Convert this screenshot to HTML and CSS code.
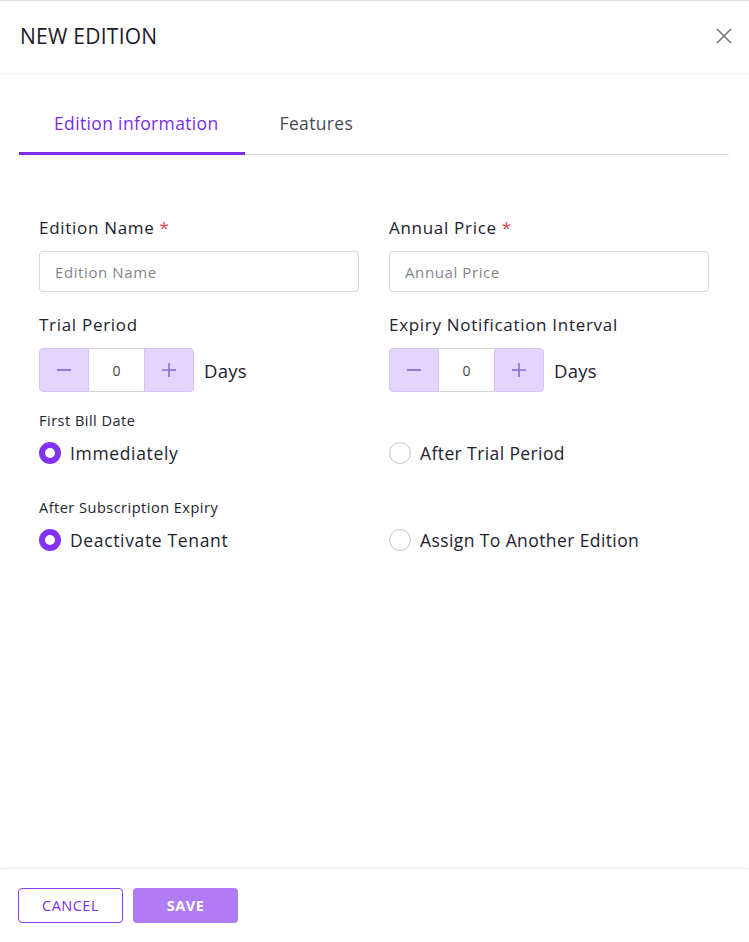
FILE: index.html
```html
<!DOCTYPE html>
<html lang="en">
<head>
<meta charset="utf-8">
<title>New Edition</title>
<link rel="stylesheet" href="styles.css">
</head>
<body>
<div class="modal">
  <header class="modal-header">
    <h1 class="modal-title">NEW EDITION</h1>
    <button class="close-btn" aria-label="Close">
      <svg width="18" height="18" viewBox="0 0 18 18"><path d="M2 2L16 16M16 2L2 16" stroke="#7a7a7a" stroke-width="1.6" fill="none"/></svg>
    </button>
  </header>
  <div class="modal-body">
    <nav class="tabs">
      <div class="tab active">Edition information</div>
      <div class="tab">Features</div>
    </nav>
    <div class="form">
      <div class="grid">
        <div class="field">
          <label class="label">Edition Name <span class="req">*</span></label>
          <input class="input" type="text" placeholder="Edition Name">
        </div>
        <div class="field">
          <label class="label">Annual Price <span class="req">*</span></label>
          <input class="input" type="text" placeholder="Annual Price">
        </div>
        <div class="field field-step">
          <label class="label">Trial Period</label>
          <div class="stepper-row">
            <div class="stepper">
              <button class="step-btn"><svg width="16" height="16" viewBox="0 0 16 16"><path d="M1 8H15" stroke="#8e6bd6" stroke-width="1.8"/></svg></button>
              <div class="step-val">0</div>
              <button class="step-btn"><svg width="16" height="16" viewBox="0 0 16 16"><path d="M1 8H15M8 1V15" stroke="#8e6bd6" stroke-width="1.6"/></svg></button>
            </div>
            <span class="days">Days</span>
          </div>
        </div>
        <div class="field field-step">
          <label class="label">Expiry Notification Interval</label>
          <div class="stepper-row">
            <div class="stepper">
              <button class="step-btn"><svg width="16" height="16" viewBox="0 0 16 16"><path d="M1 8H15" stroke="#8e6bd6" stroke-width="1.8"/></svg></button>
              <div class="step-val">0</div>
              <button class="step-btn"><svg width="16" height="16" viewBox="0 0 16 16"><path d="M1 8H15M8 1V15" stroke="#8e6bd6" stroke-width="1.6"/></svg></button>
            </div>
            <span class="days">Days</span>
          </div>
        </div>
      </div>

      <div class="group">
        <div class="group-title">First Bill Date</div>
        <div class="radio-row">
          <div class="radio"><span class="dot checked"></span>Immediately</div>
          <div class="radio"><span class="dot"></span>After Trial Period</div>
        </div>
      </div>
      <div class="group group-2">
        <div class="group-title">After Subscription Expiry</div>
        <div class="radio-row">
          <div class="radio"><span class="dot checked"></span>Deactivate Tenant</div>
          <div class="radio"><span class="dot"></span>Assign To Another Edition</div>
        </div>
      </div>
    </div>
  </div>
  <footer class="modal-footer">
    <button class="btn btn-cancel">CANCEL</button>
    <button class="btn btn-save">SAVE</button>
  </footer>
</div>
</body>
</html>
```

FILE: styles.css
```css
* { box-sizing: border-box; }
html, body { margin: 0; padding: 0; }
body {
  font-family: "Open Sans", "Liberation Sans", sans-serif;
  color: #1f1f2e;
  background: #fff;
}
.modal {
  width: 749px;
  height: 942px;
  display: flex;
  flex-direction: column;
  border-top: 1px solid #dcdcdc;
}
.modal-header {
  height: 73px;
  display: flex;
  align-items: center;
  justify-content: space-between;
  padding: 0 16px 3px 20px;
  border-bottom: 1px solid #f1f1f3;
}
.modal-title {
  margin: 0;
  font-size: 21px;
  font-weight: 500;
  letter-spacing: 0.25px;
  color: #1b1b28;
}
.close-btn {
  border: 0;
  background: none;
  padding: 0;
  width: 18px;
  height: 18px;
  cursor: pointer;
}
.modal-body {
  flex: 1;
  padding: 0 20px 0 19px;
}
.tabs {
  display: flex;
  height: 81px;
  border-bottom: 1px solid #e2e1e8;
  align-items: stretch;
}
.tab {
  padding: 37px 35px 0;
  font-size: 17.5px;
  letter-spacing: 0.35px;
  color: #4a4a55;
}
.tab.active {
  color: #7b2ded;
  border-bottom: 3px solid #7e2de8;
  margin-bottom: -1px;
  padding-right: 26px;
}
.form {
  padding: 62px 20px 0;
}
.grid {
  display: grid;
  grid-template-columns: 320px 320px;
  column-gap: 30px;
  row-gap: 22px;
}
.field { display: flex; flex-direction: column; }
.label {
  font-size: 17px;
  letter-spacing: 0.7px;
  line-height: 22px;
  color: #22222f;
  margin-bottom: 12px;
}
.req { color: #e8414d; }
.input {
  height: 41px;
  border: 1px solid #d6d6dc;
  border-radius: 4px;
  padding: 0 15px;
  font-family: inherit;
  font-size: 15px;
  letter-spacing: 0.6px;
  color: #333;
}
.input::placeholder { color: #84848f; }
.stepper-row {
  display: flex;
  align-items: center;
  gap: 10px;
}
.stepper {
  display: flex;
  height: 44px;
}
.step-btn {
  width: 50px;
  height: 44px;
  border: 1px solid #d9c2fb;
  background: #e3d4fb;
  display: flex;
  align-items: center;
  justify-content: center;
  padding: 0;
}
.step-btn:first-child { border-radius: 4px 0 0 4px; }
.step-btn:last-child { border-radius: 0 4px 4px 0; }
.step-val {
  width: 55px;
  height: 44px;
  border-top: 1px solid #d2d2d8;
  border-bottom: 1px solid #d2d2d8;
  display: flex;
  align-items: center;
  justify-content: center;
  font-size: 14px;
  color: #444;
}
.days { font-size: 18.5px; letter-spacing: 0.3px; color: #22222f; }
.group { margin-top: 19px; }
.group-2 { margin-top: 33px; }
.group-title {
  font-size: 14.5px;
  font-weight: 500;
  letter-spacing: 0.5px;
  color: #22222f;
  line-height: 20px;
}
.radio-row {
  display: grid;
  grid-template-columns: 350px 320px;
  margin-top: 10px;
}
.radio {
  display: flex;
  align-items: center;
  gap: 9px;
  font-size: 17.5px;
  letter-spacing: 0.65px;
  color: #22222f;
  line-height: 24px;
}
.radio + .radio { letter-spacing: 0.4px; }
.dot {
  width: 22px;
  height: 22px;
  border-radius: 50%;
  border: 1px solid #c4c4c8;
  flex: none;
}
.dot.checked {
  border: 6px solid #8133f1;
  background: #fff;
}
.modal-footer {
  height: 74px;
  border-top: 1px solid #ececee;
  box-shadow: 0 -1px 3px rgba(0,0,0,0.04);
  display: flex;
  align-items: flex-start;
  gap: 10px;
  padding: 19px 18px 0;
}
.btn {
  width: 105px;
  height: 35px;
  border-radius: 4px;
  font-family: inherit;
  font-size: 14.5px;
  letter-spacing: 0.5px;
  padding: 0 0 1px;
}
.btn-cancel {
  border: 1px solid #8a3bf2;
  background: #fff;
  color: #7b2ded;
}
.btn-save {
  border: 0;
  background: #b07bf5;
  color: #fff;
  font-weight: 700;
}
```
